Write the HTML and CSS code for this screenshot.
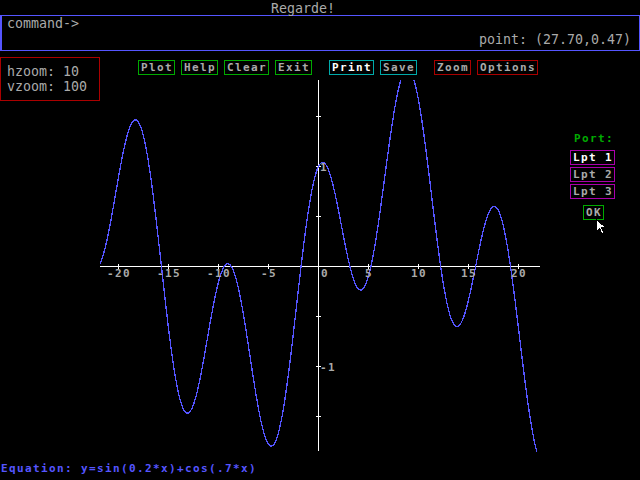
FILE: index.html
```html
<!DOCTYPE html>
<html>
<head>
<meta charset="utf-8">
<link rel="stylesheet" href="styles.css">
</head>
<body>
<div class="title">Regarde!</div>
<div class="cmd">
  <div class="cmd-line">command-&gt;</div>
  <div class="cmd-line point">point: (27.70,0.47)</div>
</div>
<div class="main">
  <div class="zoombox">
    <div class="zline">hzoom: 10</div>
    <div class="zline">vzoom: 100</div>
  </div>
  <div class="center">
    <div class="toolbar">
      <div class="group">
        <span class="btn green">Plot</span>
        <span class="btn green">Help</span>
        <span class="btn green">Clear</span>
        <span class="btn green">Exit</span>
      </div>
      <div class="group">
        <span class="btn cyan active">Print</span>
        <span class="btn cyan">Save</span>
      </div>
      <div class="group">
        <span class="btn red">Zoom</span>
        <span class="btn red">Options</span>
      </div>
    </div>
    <svg class="graph" width="440" height="372" viewBox="100 80 440 372" shape-rendering="crispEdges">
      <line class="axis" x1="100" y1="266.5" x2="541" y2="266.5"/>
      <line class="axis" x1="318.5" y1="80" x2="318.5" y2="451"/>
      <g class="ticks">
        <line x1="118.5" y1="264" x2="118.5" y2="269"/>
        <line x1="168.5" y1="264" x2="168.5" y2="269"/>
        <line x1="218.5" y1="264" x2="218.5" y2="269"/>
        <line x1="268.5" y1="264" x2="268.5" y2="269"/>
        <line x1="368.5" y1="264" x2="368.5" y2="269"/>
        <line x1="418.5" y1="264" x2="418.5" y2="269"/>
        <line x1="468.5" y1="264" x2="468.5" y2="269"/>
        <line x1="518.5" y1="264" x2="518.5" y2="269"/>
        <line x1="316" y1="116.5" x2="321" y2="116.5"/>
        <line x1="316" y1="166.5" x2="321" y2="166.5"/>
        <line x1="316" y1="216.5" x2="321" y2="216.5"/>
        <line x1="316" y1="316.5" x2="321" y2="316.5"/>
        <line x1="316" y1="366.5" x2="321" y2="366.5"/>
        <line x1="316" y1="416.5" x2="321" y2="416.5"/>
      </g>
      <polyline id="curve" class="curve" points=""/>
      <g class="labels">
        <text x="107" y="277">-20</text>
        <text x="157" y="277">-15</text>
        <text x="207" y="277">-10</text>
        <text x="261" y="277">-5</text>
        <text x="321" y="277">0</text>
        <text x="365" y="277">5</text>
        <text x="411" y="277">10</text>
        <text x="461" y="277">15</text>
        <text x="511" y="277">20</text>
        <text x="320" y="171">1</text>
        <text x="320" y="371">-1</text>
      </g>
    </svg>
  </div>
  <div class="right">
    <div class="port-title">Port:</div>
    <div class="ports">
      <span class="btn magenta active">Lpt 1</span>
      <span class="btn magenta">Lpt 2</span>
      <span class="btn magenta">Lpt 3</span>
    </div>
    <span class="btn green ok">OK</span>
    <svg class="cursor" width="11" height="16" viewBox="0 0 11 16" shape-rendering="crispEdges">
      <polygon points="0.5,0.5 0.5,12.5 3.5,9.5 6,15 8,14 5.5,8.5 9.5,8.5" fill="#ffffff" stroke="#000000" stroke-width="1"/>
    </svg>
  </div>
</div>
<div class="equation">Equation: y=sin(0.2*x)+cos(.7*x)</div>
<script src="script.js"></script>
</body>
</html>
```

FILE: styles.css
```css
html, body {
  margin: 0;
  padding: 0;
  background: #000000;
}

body {
  width: 640px;
  height: 480px;
  overflow: hidden;
  font-family: "DejaVu Sans Mono", "Liberation Mono", monospace;
  font-size: 13.29px;
  color: #aaaaaa;
}

.title {
  height: 13px;
  line-height: 13px;
  padding-top: 2px;
  padding-left: 271px;
  white-space: pre;
}

.cmd {
  box-sizing: border-box;
  height: 36px;
  border: 1px solid #5555ff;
  border-left-width: 2px;
  padding: 0 8px 0 5px;
}

.cmd-line {
  height: 16px;
  line-height: 16px;
  white-space: pre;
}

.point {
  text-align: right;
}

.main {
  display: flex;
  margin-top: 6px;
  height: 395px;
}

.zoombox {
  box-sizing: border-box;
  width: 100px;
  height: 44px;
  border: 1px solid #aa0000;
  padding: 6px 0 0 6px;
}

.zline {
  height: 15px;
  line-height: 15px;
  white-space: pre;
}

.center {
  width: 440px;
  display: flex;
  flex-direction: column;
}

.toolbar {
  height: 20px;
  padding-top: 3px;
  padding-left: 38px;
  display: flex;
  gap: 17px;
  align-items: flex-start;
}

.group {
  display: flex;
  gap: 6px;
}

.btn {
  display: inline-block;
  height: 13px;
  line-height: 13px;
  padding: 0 1px 0 2px;
  border: 1px solid #00aa00;
  font-family: "DejaVu Sans Mono", monospace;
  font-weight: bold;
  font-size: 11px;
  letter-spacing: 1.38px;
  color: #aaaaaa;
  white-space: pre;
}

.btn.green { border-color: #00aa00; }
.btn.cyan { border-color: #00aaaa; }
.btn.red { border-color: #aa0000; }
.btn.magenta { border-color: #aa00aa; }
.btn.active { color: #ffffff; }

.graph {
  display: block;
}

.axis {
  stroke: #ffffff;
  stroke-width: 1;
}

.ticks line {
  stroke: #ffffff;
  stroke-width: 1;
}

.curve {
  fill: none;
  stroke: #5555ff;
  stroke-width: 1.3;
}

.labels text {
  font-family: "DejaVu Sans Mono", monospace;
  font-weight: bold;
  font-size: 11px;
  letter-spacing: 1.38px;
  fill: #aaaaaa;
}

.right {
  position: relative;
  width: 100px;
  box-sizing: border-box;
  padding-top: 75px;
  padding-left: 30px;
  display: flex;
  flex-direction: column;
  align-items: flex-start;
}

.port-title {
  height: 13px;
  line-height: 13px;
  margin-left: 4px;
  font-family: "DejaVu Sans Mono", monospace;
  font-weight: bold;
  font-size: 11px;
  letter-spacing: 1.38px;
  color: #00aa00;
}

.ports {
  display: flex;
  flex-direction: column;
  gap: 2px;
  margin-top: 5px;
}

.ok {
  margin-top: 6px;
  margin-left: 13px;
}

.cursor {
  position: absolute;
  left: 56px;
  top: 162px;
}

.equation {
  height: 13px;
  line-height: 13px;
  margin-top: 10px;
  padding-left: 1px;
  font-family: "DejaVu Sans Mono", monospace;
  font-weight: bold;
  font-size: 11px;
  letter-spacing: 1.38px;
  color: #5555ff;
  white-space: pre;
}
```

FILE: script.js
```js
(function () {
  var pts = [];
  for (var sx = 100; sx <= 541; sx += 0.5) {
    var x = (sx - 318.5) / 10;
    var y = Math.sin(0.2 * x) + Math.cos(0.7 * x);
    pts.push(sx + "," + (266.5 - 100 * y).toFixed(2));
  }
  document.getElementById("curve").setAttribute("points", pts.join(" "));
})();
```
